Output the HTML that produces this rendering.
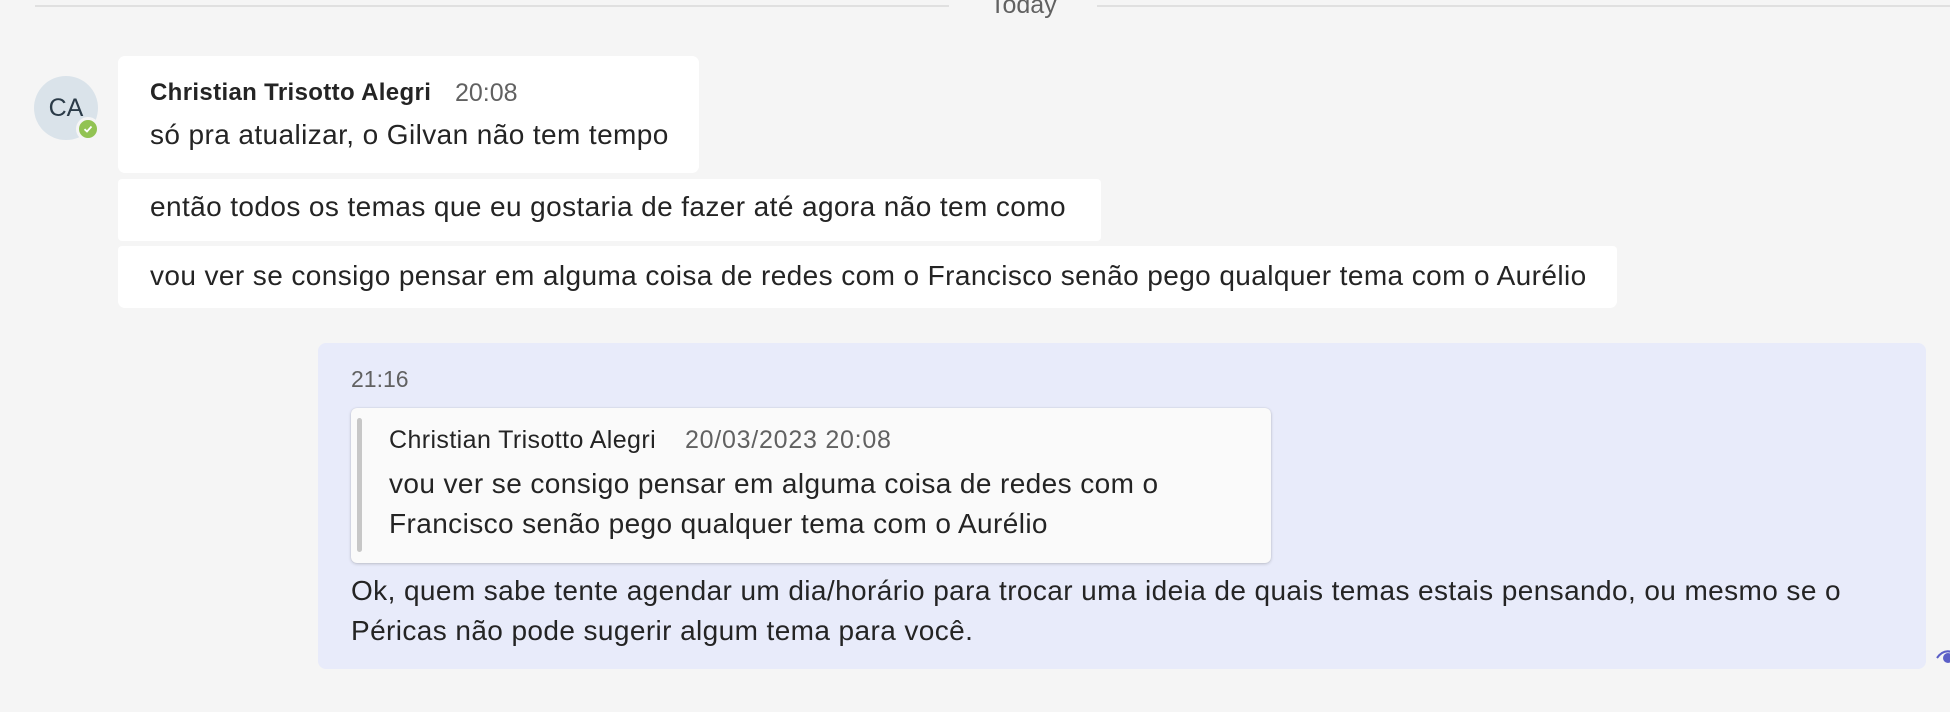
<!DOCTYPE html>
<html><head><meta charset="utf-8"><style>
*{margin:0;padding:0;box-sizing:border-box}
body{width:1950px;height:712px;background:#f5f5f5;font-family:"Liberation Sans",sans-serif;color:#242424;position:relative;overflow:hidden}
.abs{position:absolute;white-space:nowrap}
.b{position:absolute;background:#fff;border-radius:7px}
.t{font-size:28px;line-height:1;letter-spacing:0.4px}
</style></head><body>
<div class="abs" style="left:35px;top:5px;width:914px;height:2px;background:#e0e0e0"></div>
<div class="abs" style="left:1097px;top:5px;width:853px;height:2px;background:#e0e0e0"></div>
<div class="abs" style="left:990px;top:-7px;font-size:25px;line-height:1;color:#616161">Today</div>

<div class="abs" style="left:34px;top:76px;width:64px;height:64px;border-radius:50%;background:#dae3ea"></div>
<div class="abs" style="left:34px;top:96px;width:64px;text-align:center;font-size:25px;line-height:1;color:#2b3b48">CA</div>
<div class="abs" style="left:76px;top:117px;width:24px;height:24px;border-radius:50%;background:#92c353;border:3px solid #f5f5f5"></div>
<svg class="abs" style="left:82px;top:123px" width="12" height="12" viewBox="0 0 12 12"><path d="M2.5 6.2 L5 8.5 L9.5 3.5" stroke="#fff" stroke-width="1.8" fill="none"/></svg>

<div class="b" style="left:118px;top:56px;width:581px;height:117px"></div>
<div class="b" style="left:118px;top:179px;width:983px;height:62px;border-radius:4px"></div>
<div class="b" style="left:118px;top:246px;width:1499px;height:62px;border-radius:4px 4px 7px 7px"></div>
<div class="abs" style="left:150px;top:81px;font-size:24px;line-height:1;font-weight:bold;letter-spacing:0.35px;color:#242424">Christian Trisotto Alegri</div>
<div class="abs" style="left:455px;top:81px;font-size:25px;line-height:1;color:#616161">20:08</div>
<div class="abs t" style="left:150px;top:121px">só pra atualizar, o Gilvan não tem tempo</div>
<div class="abs t" style="left:150px;top:193px">então todos os temas que eu gostaria de fazer até agora não tem como</div>
<div class="abs t" style="left:150px;top:262px">vou ver se consigo pensar em alguma coisa de redes com o Francisco senão pego qualquer tema com o Aurélio</div>

<div class="abs" style="left:318px;top:343px;width:1608px;height:326px;background:#e8ebfa;border-radius:8px"></div>
<div class="abs" style="left:351px;top:368px;font-size:23px;line-height:1;color:#616161">21:16</div>
<div class="abs" style="left:351px;top:408px;width:920px;height:155px;background:#fafafa;border-radius:6px;box-shadow:0 1px 3px rgba(0,0,0,0.18),0 0 1px rgba(0,0,0,0.15)"></div>
<div class="abs" style="left:357px;top:418px;width:5px;height:134px;background:#c7c7c7;border-radius:3px"></div>
<div class="abs" style="left:389px;top:428px;font-size:25px;line-height:1;letter-spacing:0.4px;color:#242424">Christian Trisotto Alegri</div>
<div class="abs" style="left:685px;top:428px;font-size:25px;line-height:1;letter-spacing:0.75px;color:#616161">20/03/2023 20:08</div>
<div class="abs t" style="left:389px;top:470px">vou ver se consigo pensar em alguma coisa de redes com o</div>
<div class="abs t" style="left:389px;top:510px">Francisco senão pego qualquer tema com o Aurélio</div>
<div class="abs t" style="left:351px;top:577px">Ok, quem sabe tente agendar um dia/horário para trocar uma ideia de quais temas estais pensando, ou mesmo se o</div>
<div class="abs t" style="left:351px;top:617px">Péricas não pode sugerir algum tema para você.</div>

<svg class="abs" style="left:1936px;top:648px" width="20" height="16" viewBox="0 0 20 16"><path d="M1 10 Q8 0 18 5" stroke="#5b5fc7" stroke-width="2" fill="none"/><circle cx="12" cy="10" r="5" fill="#5b5fc7"/></svg>
</body></html>
